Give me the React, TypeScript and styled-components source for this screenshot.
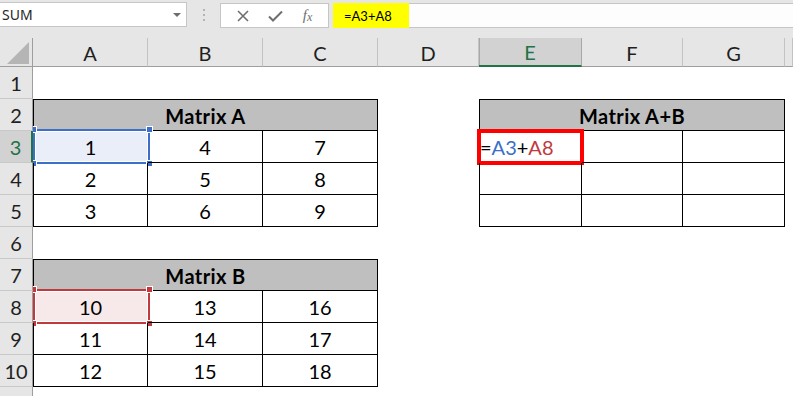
import styled, { createGlobalStyle, css } from "styled-components";

const GlobalStyle = createGlobalStyle`
  html, body {
    margin: 0;
    padding: 0;
    background: #fff;
  }
  body {
    overflow: hidden;
  }
`;

const COLS = ["A", "B", "C", "D", "E", "F", "G"];
const ACTIVE_COL = "E";
const ACTIVE_ROW = 3;
const VISIBLE_ROWS = 10;

type Selection = { color: string; fill: string } | null;

const BLUE = { color: "#3b6fc8", fill: "#eaeef8" };
const RED = { color: "#c0393d", fill: "#f7e9e9" };

// grid row of an excel row (row 1 of the grid is the column header)
const gridRow = (excelRow: number) => excelRow + 1;

export default function App() {
  return (
    <Screen>
      <GlobalStyle />
      <FormulaBar>
        <NameBox>
          SUM
          <Caret />
        </NameBox>
        <Grip>
          <span />
          <span />
          <span />
        </Grip>
        <ButtonBox>
          <svg width="12" height="12" viewBox="0 0 12 12">
            <path d="M1 1 L11 11 M11 1 L1 11" stroke="#6f6f6f" strokeWidth="1.6" fill="none" />
          </svg>
          <svg width="15" height="12" viewBox="0 0 15 12">
            <path d="M1 6.5 L5 10.5 L14 1.5" stroke="#6f6f6f" strokeWidth="2" fill="none" />
          </svg>
          <Fx>
            f<small>x</small>
          </Fx>
        </ButtonBox>
        <FormulaInput>
          <Highlight>=A3+A8</Highlight>
        </FormulaInput>
      </FormulaBar>

      <Sheet>
        <Corner>
          <svg width="22" height="22" viewBox="0 0 22 22">
            <polygon points="22,0 22,22 0,22" fill="#b5b5b5" />
          </svg>
        </Corner>
        {COLS.map((c) => (
          <ColHeader key={c} $active={c === ACTIVE_COL}>
            {c}
          </ColHeader>
        ))}
        <ColHeader />

        {Array.from({ length: VISIBLE_ROWS }, (_, i) => i + 1).map((r) => (
          <RowHeader key={r} $row={gridRow(r)} $active={r === ACTIVE_ROW}>
            {r}
          </RowHeader>
        ))}
        <RowHeader $row={gridRow(VISIBLE_ROWS + 1)} />

        <Matrix
          title="Matrix A"
          col={2}
          row={2}
          values={[
            [1, 4, 7],
            [2, 5, 8],
            [3, 6, 9],
          ]}
          picked={BLUE}
        />
        <Matrix
          title="Matrix B"
          col={2}
          row={7}
          values={[
            [10, 13, 16],
            [11, 14, 17],
            [12, 15, 18],
          ]}
          picked={RED}
        />
        <Matrix
          title="Matrix A+B"
          col={6}
          row={2}
          values={[
            [null, null, null],
            [null, null, null],
            [null, null, null],
          ]}
          editing
        />
      </Sheet>
    </Screen>
  );
}

function Matrix({
  title,
  col,
  row,
  values,
  picked = null,
  editing = false,
}: {
  title: string;
  col: number;
  row: number;
  values: (number | null)[][];
  picked?: Selection;
  editing?: boolean;
}) {
  return (
    <>
      <HeadCell $col={col} $row={gridRow(row)} $span={3} $first $top>
        {title}
      </HeadCell>
      {values.map((line, ri) =>
        line.map((v, ci) => {
          const isCorner = ri === 0 && ci === 0;
          return (
            <Cell key={`${ri}-${ci}`} $col={col + ci} $row={gridRow(row + 1 + ri)} $first={ci === 0}>
              {isCorner && picked && (
                <Picked $color={picked.color} $fill={picked.fill}>
                  <Handle $color={picked.color} $x="left" $y="top" />
                  <Handle $color={picked.color} $x="right" $y="top" />
                  <Handle $color={picked.color} $x="left" $y="bottom" />
                  <Handle $color={picked.color} $x="right" $y="bottom" />
                </Picked>
              )}
              {isCorner && editing && <Annotation />}
              {isCorner && editing ? (
                <EditText>
                  =<Ref $c={BLUE.color}>A3</Ref>+<Ref $c={RED.color}>A8</Ref>
                </EditText>
              ) : (
                v !== null && <Value>{v}</Value>
              )}
            </Cell>
          );
        })
      )}
    </>
  );
}

const Screen = styled.div`
  width: 793px;
  height: 396px;
  overflow: hidden;
  display: flex;
  flex-direction: column;
  background: #fff;
`;

const FormulaBar = styled.div`
  height: 38px;
  flex: none;
  box-sizing: border-box;
  padding-top: 2px;
  background: #e6e6e6;
  display: flex;
  align-items: flex-start;
`;

const NameBox = styled.div`
  width: 187px;
  height: 25px;
  box-sizing: border-box;
  background: #fff;
  border: 1px solid #c6c6c6;
  border-left: none;
  display: flex;
  align-items: center;
  justify-content: space-between;
  padding: 0 5px 0 2px;
  font: 14px "Noto Sans", sans-serif;
  color: #262626;
`;

const Caret = styled.span`
  width: 0;
  height: 0;
  border-left: 4px solid transparent;
  border-right: 4px solid transparent;
  border-top: 4px solid #6d6d6d;
`;

const Grip = styled.div`
  width: 33px;
  height: 25px;
  display: flex;
  flex-direction: column;
  align-items: center;
  justify-content: center;
  gap: 3px;

  span {
    width: 2px;
    height: 2px;
    background: #b4b4b4;
  }
`;

const ButtonBox = styled.div`
  width: 109px;
  height: 25px;
  margin-top: 1px;
  box-sizing: border-box;
  background: #fff;
  border: 1px solid #c6c6c6;
  display: flex;
  align-items: center;
  justify-content: space-around;
  padding: 0 6px;
`;

const Fx = styled.span`
  font: italic 15px "Liberation Serif", serif;
  color: #6f6f6f;

  small {
    font-size: 12px;
    position: relative;
    top: 1px;
  }
`;

const FormulaInput = styled.div`
  flex: 1;
  height: 25px;
  margin: 1px 0 0 4px;
  box-sizing: border-box;
  background: #fdfdfd;
  border: 1px solid #c6c6c6;
  border-right: none;
  display: flex;
`;

const Highlight = styled.div`
  width: 76px;
  margin: -1px 0 -1px -1px;
  background: #ffff00;
  display: flex;
  align-items: center;
  box-sizing: border-box;
  padding-left: 11px;
  font: 13px Lato, sans-serif;
  color: #000;
`;

const Sheet = styled.div`
  flex: 1;
  overflow: hidden;
  display: grid;
  grid-template-columns: 33px 115px 115px 115px 101px 103px 101px 102px 1fr;
  grid-template-rows: 29px repeat(11, 32px);
  background: #fff;
`;

const headerText = css`
  font: 20px Lato, sans-serif;
  color: #1f1f1f;
  display: flex;
  align-items: center;
  justify-content: center;
  box-sizing: border-box;
`;

const Corner = styled.div`
  grid-column: 1;
  grid-row: 1;
  background: #e6e6e6;
  border-right: 1px solid #9e9e9e;
  border-bottom: 1px solid #9e9e9e;
  box-sizing: border-box;
  display: flex;
  align-items: flex-end;
  justify-content: flex-end;
  padding: 0 3px 2px 0;
  position: relative;
  z-index: 2;
`;

const ColHeader = styled.div<{ $active?: boolean }>`
  ${headerText};
  grid-row: 1;
  background: #e6e6e6;
  border-right: 1px solid #c3c3c3;
  border-bottom: 1px solid #9e9e9e;
  padding-top: 1px;

  ${(p) =>
    p.$active &&
    css`
      background: #d2d2d2;
      color: #217346;
      border-right-color: #a8a8a8;
      box-shadow: inset 1px 0 0 #a8a8a8;
      border-bottom: 2px solid #217346;
    `}
`;

const RowHeader = styled.div<{ $row: number; $active?: boolean }>`
  ${headerText};
  grid-column: 1;
  grid-row: ${(p) => p.$row};
  background: #e6e6e6;
  border-right: 1px solid #9e9e9e;
  border-bottom: 1px solid #c8c8c8;
  position: relative;
  z-index: 2;

  ${(p) =>
    p.$active &&
    css`
      background: #d2d2d2;
      color: #217346;
      border-right: 2px solid #217346;
    `}
`;

const Cell = styled.div<{ $col: number; $row: number; $span?: number; $first?: boolean; $top?: boolean }>`
  grid-column: ${(p) => p.$col} / span ${(p) => p.$span ?? 1};
  grid-row: ${(p) => p.$row};
  position: relative;
  box-sizing: border-box;
  border-right: 1px solid #000;
  border-bottom: 1px solid #000;
  ${(p) => p.$first && "border-left: 1px solid #000;"}
  ${(p) => p.$top && "border-top: 1px solid #000;"}
  display: flex;
  align-items: center;
  justify-content: center;
  font: 20px Lato, sans-serif;
  color: #000;
`;

const HeadCell = styled(Cell)`
  background: #bfbfbf;
  font-weight: 700;
  letter-spacing: 0.4px;
  padding-top: 1px;
`;

const Value = styled.span`
  position: relative;
  padding-top: 1px;
`;

const Picked = styled.div<{ $color: string; $fill: string }>`
  position: absolute;
  top: -2px;
  left: -1px;
  right: -3px;
  bottom: -2px;
  border: 2px solid ${(p) => p.$color};
  background: ${(p) => p.$fill};
  box-shadow: inset 0 0 0 1px #fff;
`;

const Handle = styled.span<{ $color: string; $x: "left" | "right"; $y: "top" | "bottom" }>`
  position: absolute;
  width: 7px;
  height: 7px;
  box-sizing: border-box;
  background: ${(p) => p.$color};
  border: 1px solid #fff;
  ${(p) => `${p.$x}: -5px;`}
  ${(p) => `${p.$y}: -5px;`}
`;

const Annotation = styled.div`
  position: absolute;
  top: -2px;
  left: -3px;
  right: -3px;
  bottom: -3px;
  border: 4px solid #ff0000;
`;

const EditText = styled.span`
  position: relative;
  align-self: center;
  margin-right: auto;
  padding: 1px 0 0 0;
`;

const Ref = styled.span<{ $c: string }>`
  color: ${(p) => p.$c};
`;
